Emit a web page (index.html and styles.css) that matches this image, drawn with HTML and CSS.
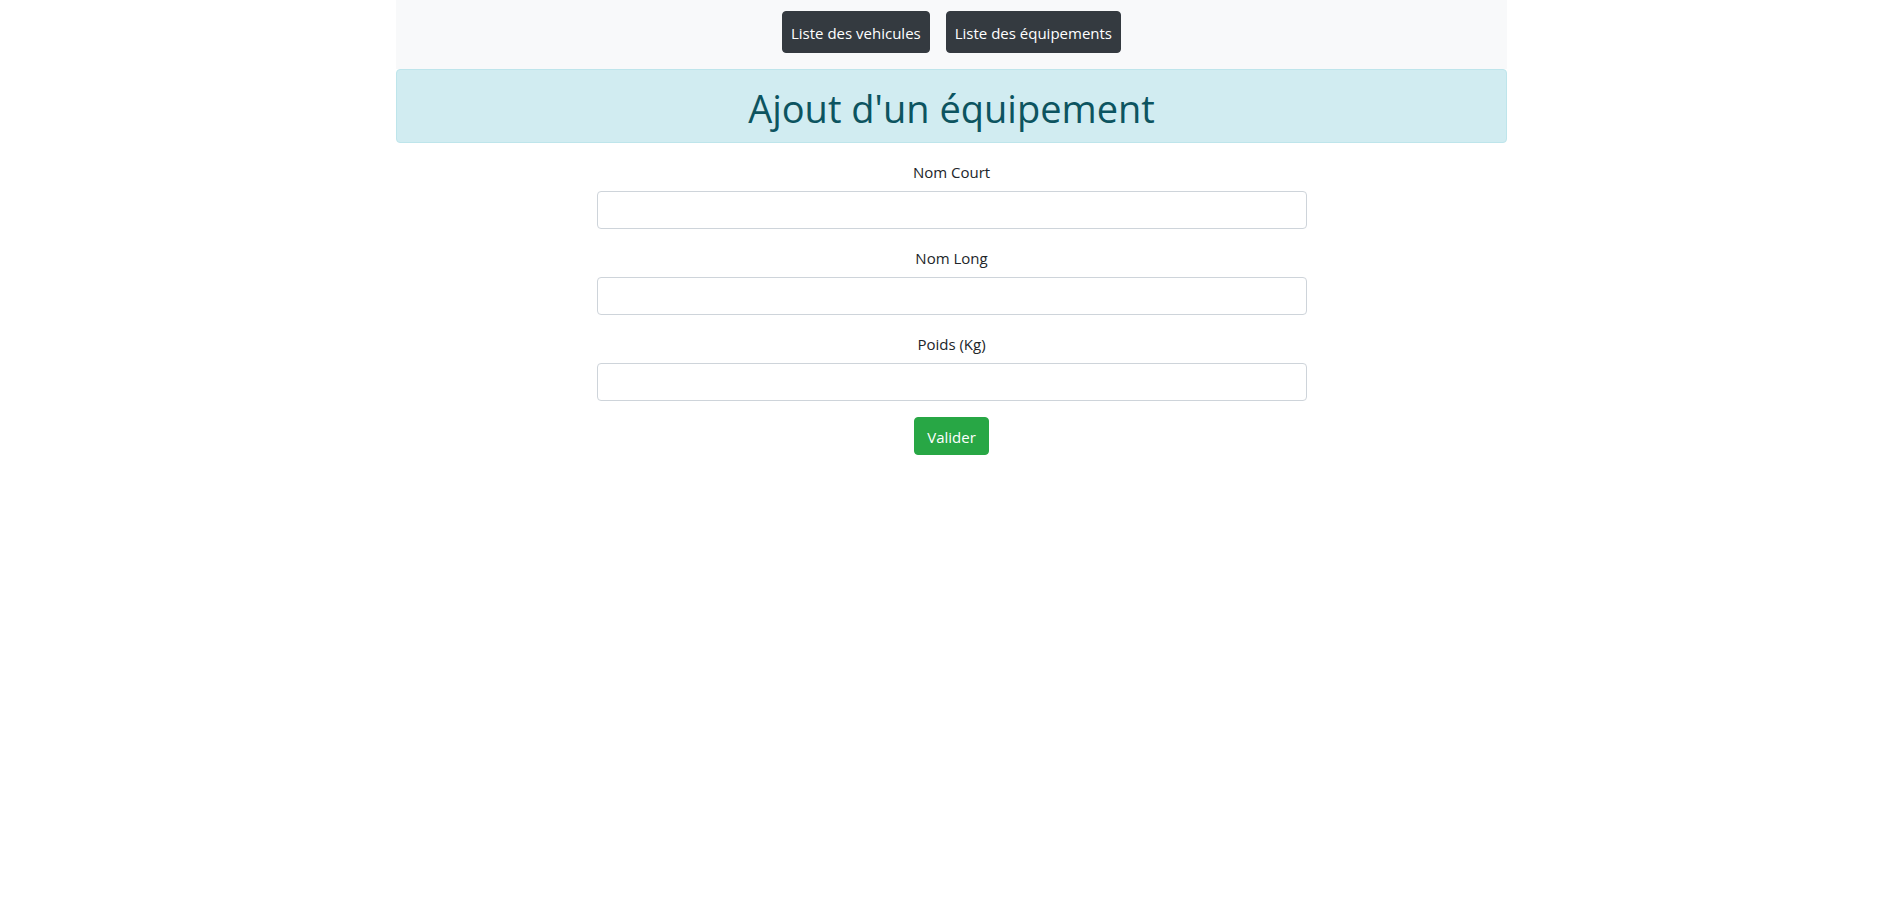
FILE: index.html
```html
<!DOCTYPE html>
<html lang="fr">
<head>
<meta charset="utf-8">
<title>Ajout d'un équipement</title>
<link rel="stylesheet" href="styles.css">
</head>
<body>
<div class="container">
  <nav class="topnav">
    <a class="navbtn" href="#">Liste des vehicules</a>
    <a class="navbtn" href="#">Liste des équipements</a>
  </nav>
  <div class="alert">
    <h1 class="title">Ajout d'un équipement</h1>
  </div>
  <form class="form">
    <div class="group">
      <label class="label" for="court">Nom Court</label>
      <input class="input" id="court" type="text">
    </div>
    <div class="group">
      <label class="label" for="long">Nom Long</label>
      <input class="input" id="long" type="text">
    </div>
    <div class="group">
      <label class="label" for="poids">Poids (Kg)</label>
      <input class="input" id="poids" type="text">
    </div>
    <div class="actions">
      <button class="submit" type="button">Valider</button>
    </div>
  </form>
</div>
</body>
</html>
```
FILE: styles.css
```css
* { box-sizing: border-box; }
body {
  margin: 0;
  background: #fff;
  color: #212529;
  font-family: "Open Sans", "Liberation Sans", sans-serif;
  font-size: 16px;
  line-height: 1.5;
}
.container {
  width: 1111px;
  margin: 0 auto;
}
.topnav {
  background: #f8f9fa;
  display: flex;
  justify-content: center;
  gap: 16px;
  padding: 11px 0 16px;
}
.navbtn {
  display: block;
  background: #343a40;
  border: 1px solid #343a40;
  border-radius: 4px;
  color: #fff;
  text-decoration: none;
  padding: 9px 8px 7px;
  font-size: 15px;
  line-height: 24px;
}
.alert {
  background: #d1ecf1;
  border: 1px solid #bee5eb;
  border-radius: 4px;
  padding: 14px 20px 10px;
  margin-bottom: 16px;
}
.title {
  margin: 0;
  color: #0c5460;
  font-size: 38px;
  font-weight: 400;
  line-height: 48px;
  text-align: center;
}
.form {
  width: 710px;
  margin: 0 auto;
  text-align: center;
}
.group {
  display: flex;
  flex-direction: column;
  margin-bottom: 16px;
}
.label {
  display: block;
  height: 25px;
  padding-top: 1px;
  margin-bottom: 7px;
  font-size: 15px;
  line-height: 24px;
}
.input {
  display: block;
  width: 100%;
  height: 38px;
  padding: 6px 12px;
  border: 1px solid #ced4da;
  border-radius: 4px;
  background: #fff;
  font: inherit;
}
.actions {
  display: flex;
  justify-content: center;
}
.submit {
  display: block;
  height: 38px;
  background: #28a745;
  border: 1px solid #28a745;
  border-radius: 4px;
  color: #fff;
  padding: 7px 12px 5px;
  font-family: inherit;
  font-size: 15px;
  line-height: 24px;
  cursor: pointer;
}
```
